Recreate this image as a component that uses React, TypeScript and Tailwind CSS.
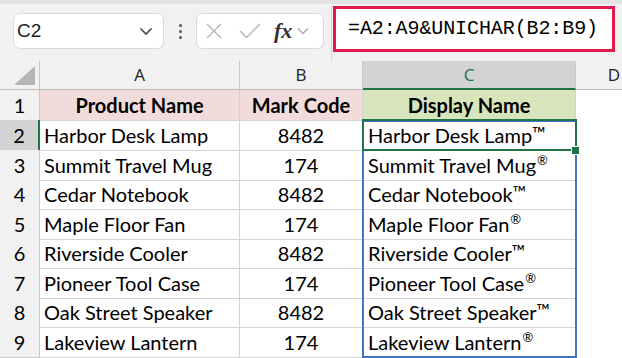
import React from 'react';

const rows = [
    { name: 'Harbor Desk Lamp', code: 8482 },
    { name: 'Summit Travel Mug', code: 174 },
    { name: 'Cedar Notebook', code: 8482 },
    { name: 'Maple Floor Fan', code: 174 },
    { name: 'Riverside Cooler', code: 8482 },
    { name: 'Pioneer Tool Case', code: 174 },
    { name: 'Oak Street Speaker', code: 8482 },
    { name: 'Lakeview Lantern', code: 174 },
];

// row heights so the sheet ends right at the bottom edge
const heights = ['h-[30px]', 'h-[29px]', 'h-[30px]', 'h-[29px]', 'h-[30px]', 'h-[29px]', 'h-[30px]', 'h-[29px]'];

const cellFont = "font-['Lato','Liberation_Sans',sans-serif] text-[20px] text-black";
const headFont = "font-['Open_Sans','Liberation_Sans',sans-serif] text-[17px]";
const grid = 'grid grid-cols-[40px_200px_123px_213px_46px]';

function Mark({ code }: { code: number }) {
    return code === 8482 ? (
        <span className="text-[18px] relative -top-[2px]">™</span>
    ) : (
        <span className="text-[13px] relative -top-[4px] ml-px">®</span>
    );
}

export default function App() {
    return (
        <div className="w-[622px] h-[358px] overflow-hidden bg-white relative">
            {/* formula bar */}
            <div className="h-[61px] bg-[#f1f1f1] border-t-[4px] border-[#e2e2e2] flex items-start">
                <div className="ml-[13px] mt-[9px] w-[151px] h-[36px] bg-white border border-[#dadada] rounded-[7px] flex items-center justify-between pl-[3px] pr-[10px]">
                    <span className="font-['Liberation_Sans',sans-serif] text-[19px] text-[#222]">C2</span>
                    <svg width="14" height="9" viewBox="0 0 14 9"><path d="M1.5 1.5 L7 7 L12.5 1.5" fill="none" stroke="#444" strokeWidth="1.6" /></svg>
                </div>
                <div className="w-[32px] h-[36px] mt-[9px] flex flex-col items-center justify-center gap-[3px]">
                    <span className="w-[3px] h-[3px] rounded-full bg-[#555]" />
                    <span className="w-[3px] h-[3px] rounded-full bg-[#555]" />
                    <span className="w-[3px] h-[3px] rounded-full bg-[#555]" />
                </div>
                <div className="mt-[9px] w-[128px] h-[36px] bg-white border border-[#dadada] rounded-[7px] flex items-center pl-[9px]">
                    <svg width="16" height="16" viewBox="0 0 16 16"><path d="M1 1 L15 15 M15 1 L1 15" stroke="#b4b4b4" strokeWidth="1.4" /></svg>
                    <svg className="ml-[17px]" width="22" height="16" viewBox="0 0 22 16"><path d="M1 8 L7.5 14.5 L21 1" fill="none" stroke="#b4b4b4" strokeWidth="1.4" /></svg>
                    <span className="ml-[13px] font-['Liberation_Serif',serif] italic font-bold text-[22px] text-[#333] leading-none">fx</span>
                    <svg className="ml-[5px]" width="12" height="8" viewBox="0 0 12 8"><path d="M1 1.5 L6 6.5 L11 1.5" fill="none" stroke="#a8a8a8" strokeWidth="1.3" /></svg>
                </div>
                <div className="ml-[7px] mt-[2px] w-px h-[54px] bg-[#d4d4d4]" />
                <div className="ml-px mt-[2px] w-[282px] h-[46px] bg-white border-[3px] border-[#e0194d] flex items-center pl-[12px]">
                    <span className="font-['Liberation_Mono',monospace] text-[20px] text-black tracking-[-0.1px]">=A2:A9&amp;UNICHAR(B2:B9)</span>
                </div>
            </div>

            {/* sheet */}
            <div className="relative">
                <div className={`${grid} h-[29px] bg-[#f1f1f1] border-b border-[#bdbdbd]`}>
                    <div className="border-r border-[#c8c8c8] flex items-end justify-end pr-[4px] pb-[4px]">
                        <svg width="21" height="19" viewBox="0 0 21 19"><path d="M21 0 L21 19 L0 19 Z" fill="#b5b5b5" /></svg>
                    </div>
                    <div className={`${headFont} border-r border-[#c8c8c8] flex items-center justify-center text-[#222]`}>A</div>
                    <div className={`${headFont} border-r border-[#c8c8c8] flex items-center justify-center text-[#222]`}>B</div>
                    <div className={`${headFont} bg-[#d3d3d3] border-r border-[#c8c8c8] border-b-[2px] border-b-[#217346] -mb-px flex items-center justify-center text-[#217346]`}>C</div>
                    <div className={`${headFont} flex items-center justify-end pr-[2px] text-[#222]`}>D</div>
                </div>

                <div className={`${grid} h-[30px]`}>
                    <div className={`${cellFont} bg-[#f1f1f1] border-r border-b border-[#c8c8c8] flex items-center justify-center text-[#222]`}>1</div>
                    <div className={`${cellFont} font-bold bg-[#f2dcdb] border-r border-b border-[#d4d4d4] flex items-center justify-center`}>Product Name</div>
                    <div className={`${cellFont} font-bold bg-[#f2dcdb] border-r border-b border-[#d4d4d4] flex items-center justify-center`}>Mark Code</div>
                    <div className={`${cellFont} font-bold bg-[#d8e4bc] border-r border-b border-[#d4d4d4] flex items-center justify-center`}>Display Name</div>
                    <div />
                </div>

                {rows.map((r, i) => {
                    const sel = i === 0;
                    return (
                        <div key={r.name} className={`${grid} ${heights[i]}`}>
                            <div className={`${cellFont} border-b border-[#c8c8c8] flex items-center justify-center ${sel ? 'bg-[#d3d3d3] text-[#217346] border-r-[2px] border-r-[#217346]' : 'bg-[#f1f1f1] text-[#222] border-r'}`}>{i + 2}</div>
                            <div className={`${cellFont} border-r border-b border-[#d4d4d4] flex items-center pl-[4px] whitespace-nowrap`}>{r.name}</div>
                            <div className={`${cellFont} border-r border-b border-[#d4d4d4] flex items-center justify-center`}>{r.code}</div>
                            <div className={`${cellFont} border-r border-b border-[#d4d4d4] flex items-center pl-[5px] whitespace-nowrap`}>
                                {r.name}
                                <Mark code={r.code} />
                            </div>
                            <div />
                        </div>
                    );
                })}

                {/* spill range C2:C9 */}
                <div className="absolute left-[362px] top-[59px] w-[215px] h-[238px] border-[2px] border-[#4472c4] pointer-events-none" />
                {/* active cell C2 */}
                <div className="absolute left-[362px] top-[58px] w-[215px] h-[32px] border-[2px] border-[#217346] pointer-events-none" />
                <div className="absolute left-[571px] top-[85px] w-[9px] h-[9px] bg-[#217346] border border-white" />
            </div>
        </div>
    );
}
